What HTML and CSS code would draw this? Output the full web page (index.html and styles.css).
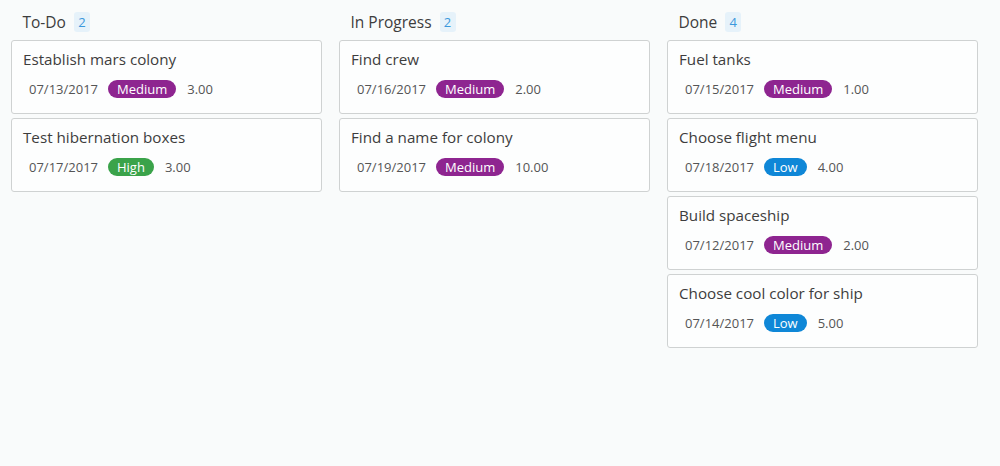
FILE: index.html
```html
<!DOCTYPE html>
<html>
<head>
<meta charset="utf-8">
<link rel="stylesheet" href="styles.css">
</head>
<body>
<div class="board">
  <section class="column">
    <header class="col-head"><span class="col-title">To-Do</span><span class="count">2</span></header>
    <div class="card"><div class="title">Establish mars colony</div><div class="meta"><span class="date">07/13/2017</span><span class="pill medium">Medium</span><span class="est">3.00</span></div></div>
    <div class="card"><div class="title">Test hibernation boxes</div><div class="meta"><span class="date">07/17/2017</span><span class="pill high">High</span><span class="est">3.00</span></div></div>
  </section>
  <section class="column">
    <header class="col-head"><span class="col-title">In Progress</span><span class="count">2</span></header>
    <div class="card"><div class="title">Find crew</div><div class="meta"><span class="date">07/16/2017</span><span class="pill medium">Medium</span><span class="est">2.00</span></div></div>
    <div class="card"><div class="title">Find a name for colony</div><div class="meta"><span class="date">07/19/2017</span><span class="pill medium">Medium</span><span class="est">10.00</span></div></div>
  </section>
  <section class="column">
    <header class="col-head"><span class="col-title">Done</span><span class="count">4</span></header>
    <div class="card"><div class="title">Fuel tanks</div><div class="meta"><span class="date">07/15/2017</span><span class="pill medium">Medium</span><span class="est">1.00</span></div></div>
    <div class="card"><div class="title">Choose flight menu</div><div class="meta"><span class="date">07/18/2017</span><span class="pill low">Low</span><span class="est">4.00</span></div></div>
    <div class="card"><div class="title">Build spaceship</div><div class="meta"><span class="date">07/12/2017</span><span class="pill medium">Medium</span><span class="est">2.00</span></div></div>
    <div class="card"><div class="title">Choose cool color for ship</div><div class="meta"><span class="date">07/14/2017</span><span class="pill low">Low</span><span class="est">5.00</span></div></div>
  </section>
</div>
</body>
</html>
```
FILE: styles.css
```css
html, body {
  margin: 0;
  padding: 0;
  background: #f9fbfb;
  font-family: "Open Sans", "Noto Sans", sans-serif;
  color: #444;
}
.board {
  display: grid;
  grid-template-columns: repeat(3, 311px);
  column-gap: 17px;
  padding: 0 11px;
  align-items: start;
}
.column {
  display: flex;
  flex-direction: column;
  gap: 4px;
}
.col-head {
  display: flex;
  align-items: center;
  gap: 8px;
  height: 24px;
  padding: 10px 0 2px 11.5px;
}
.col-title {
  font-size: 15.5px;
  color: #3d3d3d;
}
.count {
  display: inline-flex;
  align-items: center;
  justify-content: center;
  min-width: 16px;
  height: 20px;
  border-radius: 3px;
  background: #e6f2fa;
  color: #3b98dc;
  font-size: 13px;
}
.card {
  background: #fdfefe;
  border: 1px solid #cfd2d2;
  border-radius: 3px;
  padding: 7px 10px 14px 11px;
}
.title {
  font-size: 15.2px;
  line-height: 22px;
  color: #3d3d3d;
}
.meta {
  display: flex;
  align-items: center;
  height: 20px;
  margin-top: 9px;
  padding-left: 6px;
  font-size: 13px;
  color: #555;
}
.date {
  margin-right: 10px;
}
.pill {
  display: inline-flex;
  align-items: center;
  height: 18px;
  padding: 0 9px;
  border-radius: 9px;
  color: #fff;
  font-size: 13px;
  font-weight: 400;
  margin-right: 11px;
}
.medium { background: #8e2590; }
.high { background: #3aa34a; }
.low { background: #0f87d7; }
```
